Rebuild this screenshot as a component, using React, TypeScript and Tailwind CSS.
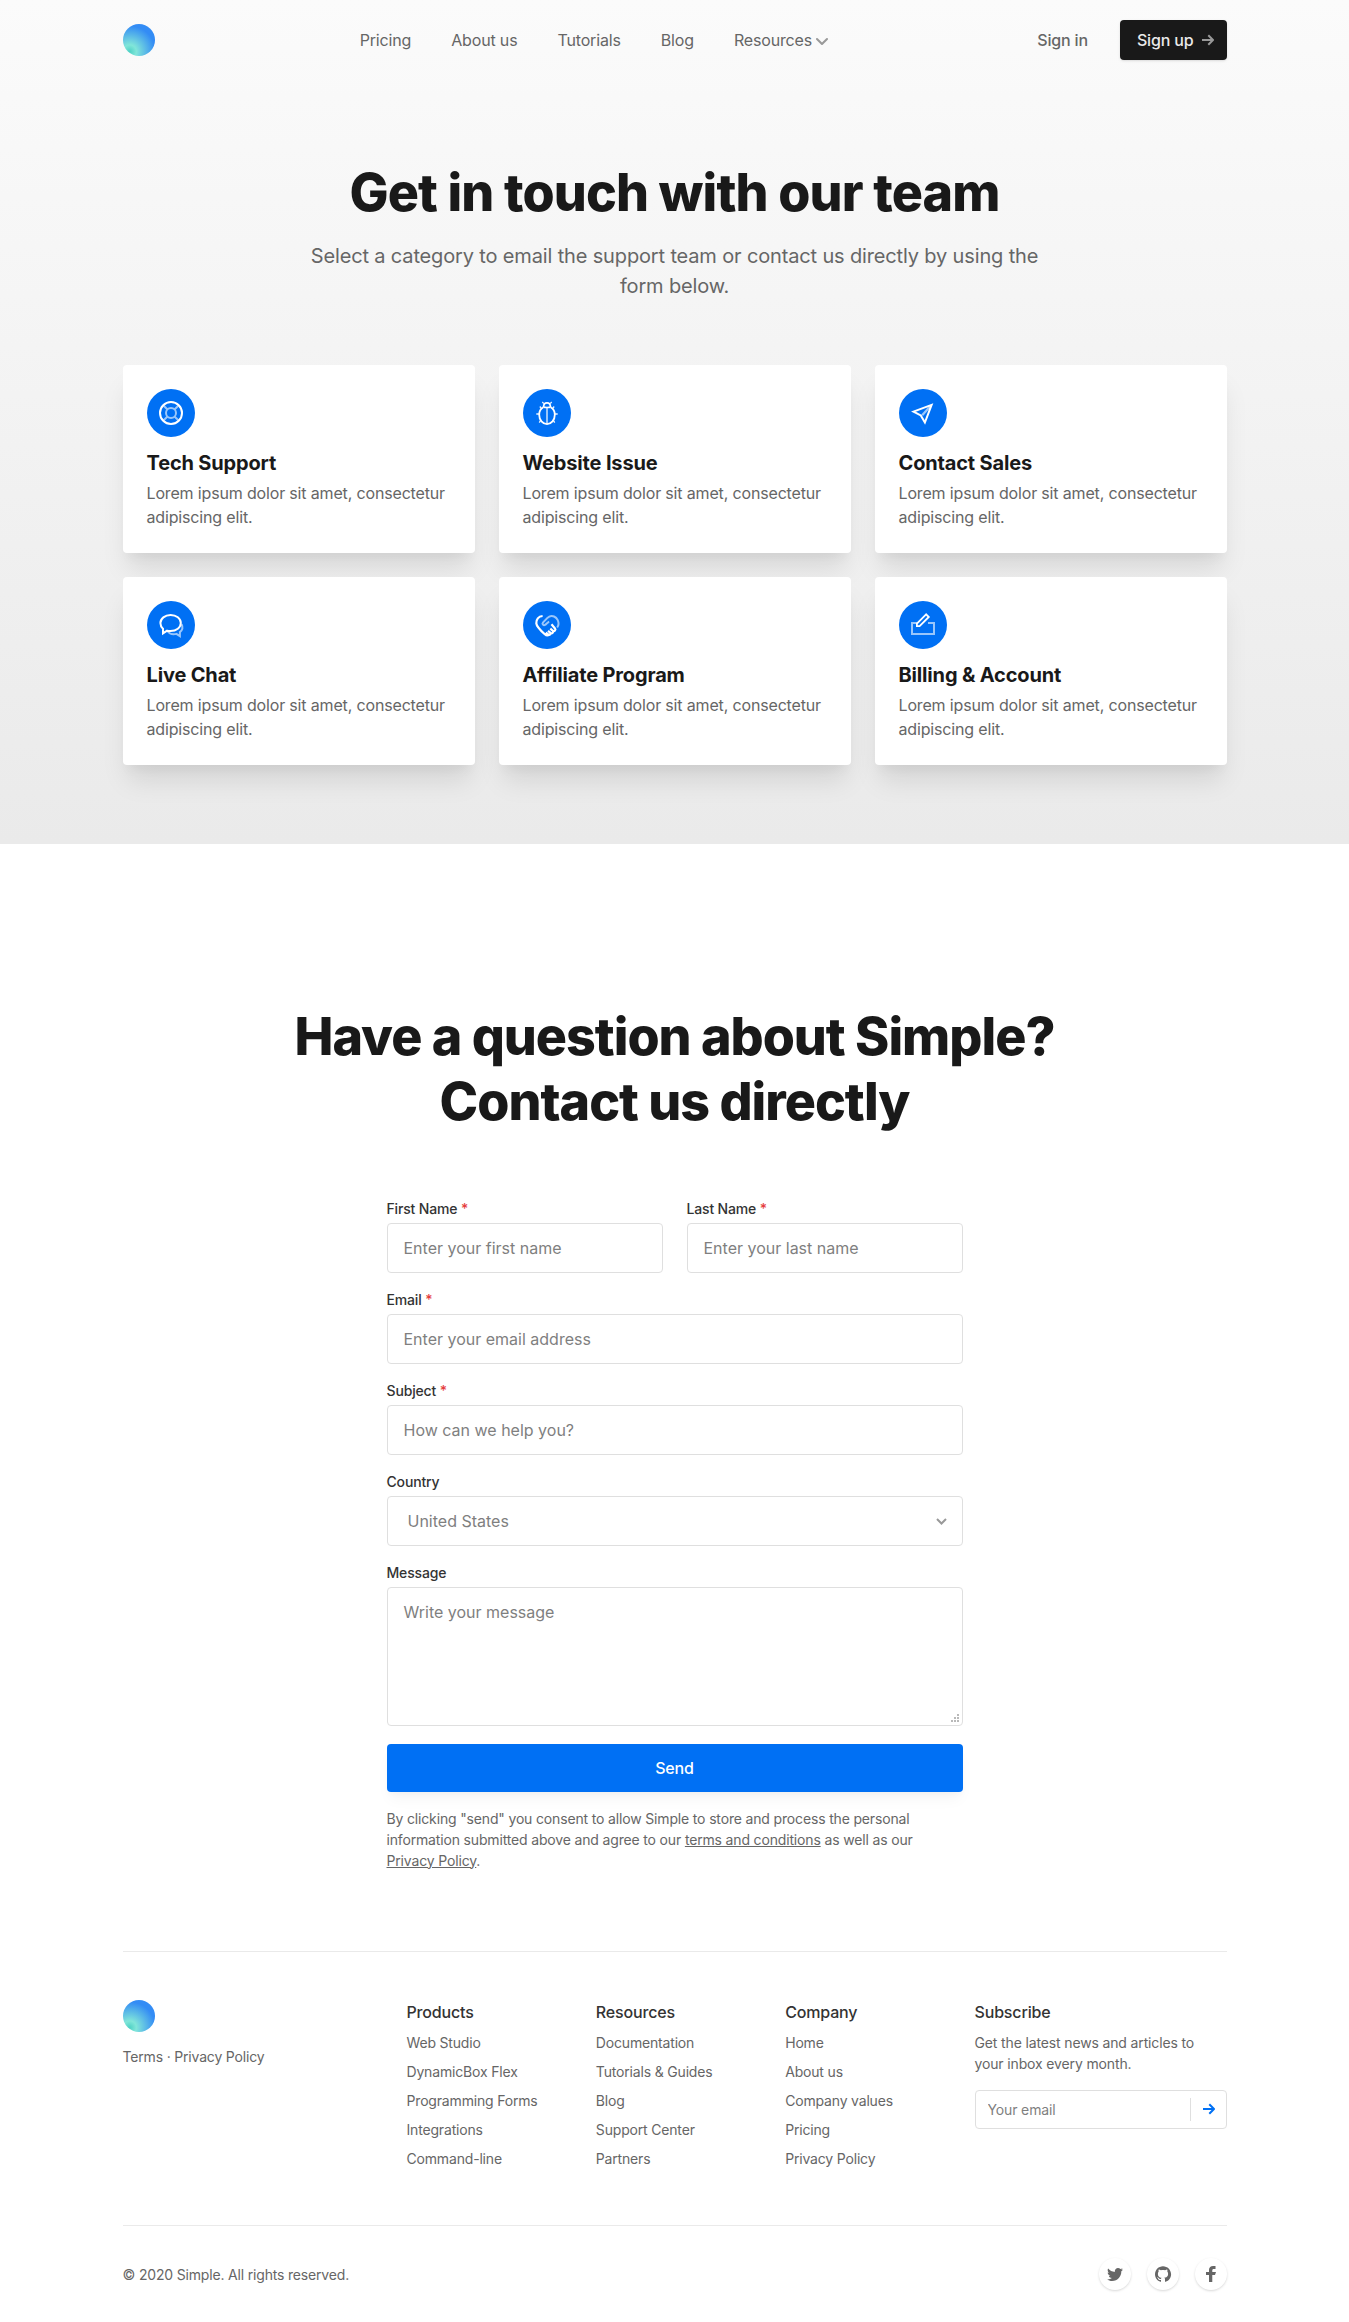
import React, { type ReactNode } from 'react';

function Logo({ id }: { id: string }) {
  return (
    <svg className="block h-8 w-8" viewBox="0 0 32 32">
      <defs>
        <radialGradient cx="21.152%" cy="86.063%" fx="21.152%" fy="86.063%" r="79.941%" id={id}>
          <stop stopColor="#4FD1C5" offset="0%" />
          <stop stopColor="#81E6D9" offset="25.871%" />
          <stop stopColor="#338CF5" offset="100%" />
        </radialGradient>
      </defs>
      <circle cx="16" cy="16" r="16" fill={`url(#${id})`} />
    </svg>
  );
}

function Arrow({ className }: { className: string }) {
  return (
    <svg className={className} viewBox="0 0 12 12">
      <path d="M11.707 5.293L7 .586 5.586 2l3 3H0v2h8.586l-3 3L7 11.414l4.707-4.707a1 1 0 000-1.414z" />
    </svg>
  );
}

function Header() {
  const links = ['Pricing', 'About us', 'Tutorials', 'Blog'];
  return (
    <header className="mx-auto flex h-20 max-w-6xl items-center px-6">
      <div className="mr-4 shrink-0">
        <Logo id="header-logo" />
      </div>
      <nav className="flex grow">
        <ul className="flex grow items-center justify-center">
          {links.map((l) => (
            <li key={l} className="px-5 py-2 text-[#666]">{l}</li>
          ))}
          <li className="flex items-center px-5 py-2 text-[#666]">
            Resources
            <svg className="ml-1 h-3 w-3 fill-[#999]" viewBox="0 0 12 12">
              <path d="M10.28 4.305L5.989 8.598 1.695 4.305A1 1 0 00.28 5.72l5 5a1 1 0 001.414 0l5-5a1 1 0 10-1.414-1.414z" />
            </svg>
          </li>
        </ul>
        <ul className="flex items-center justify-end">
          <li className="px-5 py-3 font-medium text-[#666]">Sign in</li>
          <li className="ml-3 flex h-10 items-center rounded bg-[#191919] px-[17px] font-medium leading-snug text-[#eaeaea] shadow-sm">
            Sign up
            <Arrow className="-mr-1 ml-2 h-3 w-3 fill-[#999]" />
          </li>
        </ul>
      </nav>
    </header>
  );
}

const icons: Record<string, ReactNode> = {
  support: (
    <>
      <g opacity=".6">
        <circle cx="24" cy="24" r="5" />
        <path d="M20.5 20.5l-4.3-4.3M27.5 20.5l4.3-4.3M20.5 27.5l-4.3 4.3M27.5 27.5l4.3 4.3" />
      </g>
      <circle cx="24" cy="24" r="11" />
    </>
  ),
  bug: (
    <>
      <path opacity=".6" d="M24 19v16" />
      <path strokeWidth="1.3" opacity=".9" d="M20.8 14.6L19.300 13M27.200 14.600L28.700 13M18.400 19.500L16.800 17.500M29.600 19.500L31.200 17.500M16 25h-2.700M32 25h2.700M17.600 31.400L16.300 33.600M30.400 31.400L31.700 33.600" />
      <path strokeWidth="1.700" d="M20.600 17.800c0-2.300 1.400-3.900 3.400-3.900s3.400 1.600 3.400 3.900c-1 .9-5.800.9-6.800 0z" />
      <path strokeWidth="1.800" d="M20.300 18.300c-2.400 1.300-4.100 4-4.100 7.400 0 5.300 3.500 9.400 7.800 9.400s7.800-4.100 7.800-9.400c0-3.400-1.700-6.100-4.100-7.400" />
    </>
  ),
  plane: (
    <>
      <path opacity=".6" d="M23.2 26.2L31.5 17" strokeWidth="2.4" />
      <path d="M32.6 15.9L14.5 22.6L21.8 26.4L25.9 33.5z" />
    </>
  ),
  chat: (
    <>
      <path opacity=".6" d="M34.600 23.200c1.300 2.600.9 5.800-1.700 7.900v4l-3.500-2.200c-3.500.8-7.200-.2-9-2.900" />
      <path d="M23.600 14c-5.700 0-10.200 3.600-10.200 8 0 2.400.9 4.200 2.600 5.700v4.700l4.100-2.700c1.100.3 2.300.4 3.500.4 5.700 0 10.200-3.600 10.200-8.100s-4.500-8-10.200-8z" />
    </>
  ),
  hands: (
    <>
      <path opacity=".6" d="M34.200 26.500c1.500-2 1.500-5.300.4-7.600-1.500-3.200-5.200-4.700-8.300-3.300-2.200 1-4.600 4.300-6.400 6.100-1.200 1.200.7 3.200 2.200 2.100 1.500-1 2.600-2.700 4.100-3.100" />
      <path strokeWidth="2.200" d="M19.600 15c-4.100.3-6.600 3.600-6.300 7.300.3 3.300 5.500 8.200 8.500 10.900 1.500 1.400 3.100 1.500 4.400.4M28.500 23.300l3.500 4.200c1.200 1.500-.6 3.400-2.100 2.300l-2.600-2.200M29.900 29.900c.8 1.600-.9 3-2.400 2l-2.500-2M27.500 31.900c.5 1.300-.7 2.200-2 1.800l-2.700-2" />
    </>
  ),
  billing: (
    <>
      <path opacity=".6" d="M18 22H13v11h22V22h-6" />
      <path strokeWidth="1.800" d="M27.100 13.300L17.900 22.500V25.200H20.600L29.800 16z" />
    </>
  ),
};

const categories = [
  { icon: 'support', title: 'Tech Support' },
  { icon: 'bug', title: 'Website Issue' },
  { icon: 'plane', title: 'Contact Sales' },
  { icon: 'chat', title: 'Live Chat' },
  { icon: 'hands', title: 'Affiliate Program' },
  { icon: 'billing', title: 'Billing & Account' },
];

function Hero() {
  return (
    <section className="mx-auto h-[764px] max-w-6xl px-6 pt-20">
      <div className="mx-auto max-w-3xl pb-16 text-center">
        <h1 className="mb-4 text-[52px] font-extrabold leading-tight tracking-[-0.017em]">Get in touch with our team</h1>
        <p className="text-xl leading-[30px] tracking-[-0.0075em] text-[#666]">
          Select a category to email the support team or contact us directly by using the form below.
        </p>
      </div>
      <div className="grid grid-cols-3 gap-6">
        {categories.map((c) => (
          <div
            key={c.title}
            className="flex flex-col rounded bg-white p-6 shadow-[0_20px_25px_-5px_rgba(0,0,0,0.1),0_10px_10px_-5px_rgba(0,0,0,0.04)]"
          >
            <div className="mb-3 h-12 w-12 rounded-full bg-[#0070f4]">
              <svg className="h-12 w-12" viewBox="0 0 48 48" fill="none" stroke="#fff" strokeWidth="2">
                {icons[c.icon]}
              </svg>
            </div>
            <h2 className="mb-1 text-xl font-bold leading-7">{c.title}</h2>
            <p className="text-[#666]">Lorem ipsum dolor sit amet, consectetur adipiscing elit.</p>
          </div>
        ))}
      </div>
    </section>
  );
}

function Field({ id, label, required, children }: { id: string; label: string; required?: boolean; children: ReactNode }) {
  return (
    <div>
      <label htmlFor={id} className="mb-1 block text-sm font-medium leading-[21px] text-[#333]">
        {label}
        {required && <span className="text-[#e53e3e]"> *</span>}
      </label>
      {children}
    </div>
  );
}

const input =
  'block h-[50px] w-full rounded border border-[#dfdfdf] bg-white px-4 py-3 leading-6 tracking-normal placeholder:text-[#7f7f7f]';

function ContactForm() {
  return (
    <section className="mx-auto max-w-6xl px-6 pt-40 pb-20">
      <h2 className="mx-auto mb-16 max-w-3xl text-center text-[52px] font-extrabold leading-tight tracking-[-0.0195em]">
        Have a question about Simple? Contact us directly
      </h2>
      <form className="mx-auto max-w-xl">
        <div className="flex flex-col gap-4">
          <div className="grid grid-cols-2 gap-6">
            <Field id="first-name" label="First Name" required>
              <input id="first-name" className={input} placeholder="Enter your first name" />
            </Field>
            <Field id="last-name" label="Last Name" required>
              <input id="last-name" className={input} placeholder="Enter your last name" />
            </Field>
          </div>
          <Field id="email" label="Email" required>
            <input id="email" className={input} placeholder="Enter your email address" />
          </Field>
          <Field id="subject" label="Subject" required>
            <input id="subject" className={input} placeholder="How can we help you?" />
          </Field>
          <Field id="country" label="Country">
            <div
              id="country"
              className="flex h-[50px] items-center justify-between rounded border border-[#dfdfdf] bg-white pl-5 pr-[15px] tracking-normal text-[#7f7f7f]"
            >
              United States
              <svg className="h-[7px] w-[11px]" viewBox="0 0 11 7" fill="none" stroke="#999" strokeWidth="2">
                <path d="M1 1l4.500 4.500L10 1" />
              </svg>
            </div>
          </Field>
          <Field id="message" label="Message">
            <div className="relative">
              <textarea
                id="message"
                className="block h-[139px] w-full resize-none rounded border border-[#dfdfdf] bg-white px-4 py-3 leading-6 tracking-normal placeholder:text-[#7f7f7f]"
                placeholder="Write your message"
              />
              <svg className="absolute right-1 bottom-1 h-2 w-2" viewBox="0 0 8 8" fill="#b9b9b9" shapeRendering="crispEdges">
                <path d="M6 0h2v2H6zM3 3h2v2H3zM6 3h2v2H6zM0 6h2v2H0zM3 6h2v2H3zM6 6h2v2H6z" />
              </svg>
            </div>
          </Field>
        </div>
        <button
          type="button"
          className="mt-[17.500px] block h-12 w-full rounded bg-[#0070f4] font-medium leading-snug tracking-[-0.01em] text-white shadow-[0_10px_15px_-3px_rgba(0,0,0,0.04),0_4px_6px_-2px_rgba(0,0,0,0.03)]"
        >
          Send
        </button>
        <p className="mt-4 text-sm leading-[21px] text-[#666]">
          By clicking "send" you consent to allow Simple to store and process the personal information submitted above and
          agree to our <span className="underline">terms and conditions</span> as well as our{' '}
          <span className="underline">Privacy Policy</span>.
        </p>
      </form>
    </section>
  );
}

const columns = [
  { title: 'Products', items: ['Web Studio', 'DynamicBox Flex', 'Programming Forms', 'Integrations', 'Command-line'] },
  { title: 'Resources', items: ['Documentation', 'Tutorials & Guides', 'Blog', 'Support Center', 'Partners'] },
  { title: 'Company', items: ['Home', 'About us', 'Company values', 'Pricing', 'Privacy Policy'] },
];

const socials = [
  'M24 11.5c-.6.3-1.2.4-1.9.5.7-.4 1.2-1 1.4-1.8-.6.4-1.3.6-2.1.8-.6-.6-1.5-1-2.4-1-1.7 0-3.2 1.5-3.2 3.3 0 .3 0 .5.1.7-2.7-.1-5.2-1.4-6.8-3.4-.3.5-.4 1-.4 1.7 0 1.1.6 2.1 1.5 2.7-.5 0-1-.2-1.5-.4 0 1.6 1.1 2.9 2.6 3.2-.3.1-.6.1-.9.1-.2 0-.4 0-.6-.1.4 1.3 1.6 2.3 3.1 2.3-1.1.9-2.5 1.4-4.1 1.4H8c1.5.9 3.2 1.5 5 1.5 6 0 9.3-5 9.3-9.3v-.4c.7-.5 1.3-1.1 1.7-1.8z',
  'M16 8.2c-4.4 0-8 3.6-8 8 0 3.5 2.3 6.5 5.5 7.6.4.1.5-.2.5-.4V22c-2.2.5-2.7-1-2.7-1-.4-.9-.9-1.2-.9-1.2-.7-.5.1-.5.1-.5.8.1 1.2.8 1.2.8.7 1.3 1.9.9 2.3.7.1-.5.3-.9.5-1.1-1.8-.2-3.6-.9-3.6-4 0-.9.3-1.6.8-2.1-.1-.2-.4-1 .1-2.1 0 0 .7-.2 2.2.8.6-.2 1.3-.3 2-.3s1.4.1 2 .3c1.5-1 2.2-.8 2.2-.8.4 1.1.2 1.9.1 2.1.5.6.8 1.3.8 2.1 0 3.1-1.9 3.7-3.7 3.9.3.4.6.9.6 1.6v2.2c0 .2.1.5.6.4 3.2-1.1 5.5-4.1 5.5-7.6-.1-4.4-3.7-8-8.1-8z',
  'M14.023 24L14 17h-3v-3h3v-2c0-2.7 1.672-4 4.08-4 1.153 0 2.144.086 2.433.124v2.821h-1.67c-1.31 0-1.563.623-1.563 1.536V14H21l-1 3h-2.72v7h-3.257z',
];

function Footer() {
  return (
    <footer className="mx-auto max-w-6xl px-6 text-sm leading-[21px] tracking-[-0.0125em] text-[#666]">
      <div className="grid grid-cols-12 gap-8 border-t border-[#eaeaea] py-12">
        <div className="col-span-3">
          <Logo id="footer-logo" />
          <div className="mt-[14.500px]">Terms · Privacy Policy</div>
        </div>
        {columns.map((c) => (
          <div key={c.title} className="col-span-2">
            <h3 className="mb-2 text-base leading-6 font-medium tracking-[-0.01em] text-[#333]">{c.title}</h3>
            <ul>
              {c.items.map((i) => (
                <li key={i} className="mb-2 whitespace-nowrap">{i}</li>
              ))}
            </ul>
          </div>
        ))}
        <div className="col-span-3">
          <h3 className="mb-2 text-base leading-6 font-medium tracking-[-0.01em] text-[#333]">Subscribe</h3>
          <p className="mb-4 pr-6 tracking-[-0.01em]">Get the latest news and articles to your inbox every month.</p>
          <div className="flex h-[39px] items-center rounded border border-[#dfdfdf]">
            <input
              className="min-w-0 grow px-3 text-sm leading-[21px] tracking-[-0.01em] placeholder:text-[#7f7f7f]"
              placeholder="Your email"
            />
            <div className="flex h-[23px] items-center border-l border-[#dfdfdf] pl-3 pr-[11px]">
              <Arrow className="h-3 w-3 fill-[#0070f4]" />
            </div>
          </div>
        </div>
      </div>
      <div className="flex items-center justify-between border-t border-[#eaeaea] py-8">
        <div className="pt-px">© 2020 Simple. All rights reserved.</div>
        <ul className="flex gap-4">
          {socials.map((d) => (
            <li
              key={d}
              className="h-8 w-8 rounded-full bg-white shadow-[0_1px_3px_0_rgba(0,0,0,0.1),0_1px_2px_0_rgba(0,0,0,0.06)]"
            >
              <svg className="h-8 w-8 fill-[#666]" viewBox="0 0 32 32">
                <path d={d} />
              </svg>
            </li>
          ))}
        </ul>
      </div>
    </footer>
  );
}

export default function App() {
  return (
    <div className="h-[2322px] overflow-hidden bg-white font-['Inter',sans-serif] leading-6 tracking-[-0.01em] text-[#191919] antialiased">
      <div className="h-[844px] bg-linear-to-b from-[#fbfbfb] to-[#eaeaea]">
        <Header />
        <Hero />
      </div>
      <ContactForm />
      <Footer />
    </div>
  );
}
